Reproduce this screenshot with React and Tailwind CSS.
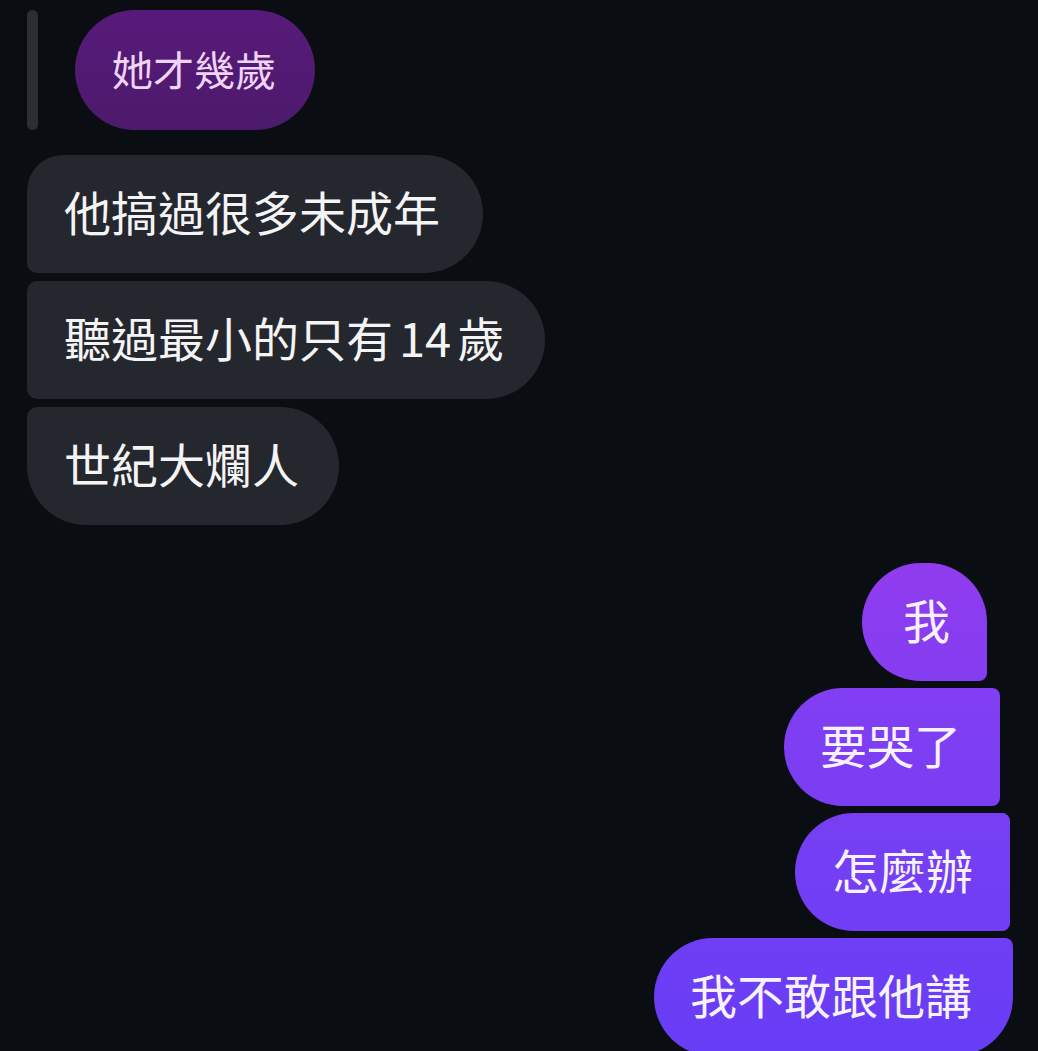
const font = { fontFamily: '"Noto Sans CJK TC", "Noto Sans", sans-serif' };

// Incoming messages, grouped (corner radii depend on position in the group)
const incoming = [
  { text: '他搞過很多未成年', corners: 'rounded-tl-[36px] rounded-bl-[10px] pr-[43px]' },
  { text: '聽過最小的只有', tail: '14', end: '歲', corners: 'rounded-tl-[10px] rounded-bl-[10px] pr-[41px]' },
  { text: '世紀大爛人', corners: 'rounded-tl-[10px] rounded-bl-[59px] pr-[40px]' },
];

function Incoming({ msg }) {
  return (
    <div
      className={`h-[118px] pb-[8px] flex items-center self-start bg-[#25272e] rounded-r-[59px] pl-[37px] text-[47px] text-[#f4f4f5] leading-none ${msg.corners}`}
    >
      <span>
        {msg.text}
        {msg.tail && <span className="px-[6px]">{msg.tail}</span>}
        {msg.end}
      </span>
    </div>
  );
}

function Outgoing({ text, className }) {
  return (
    <div
      className={`h-[118px] pb-[8px] flex items-center self-end rounded-l-[59px] text-[47px] text-[#f7f2ff] leading-none ${className}`}
    >
      <span>{text}</span>
    </div>
  );
}

export default function App() {
  return (
    <div style={font} className="w-[1038px] h-[1051px] overflow-hidden bg-[#0a0d12] flex flex-col">
      {/* Replied-to message preview */}
      <div className="flex items-stretch gap-[37px] pl-[27px] pt-[10px]">
        <div className="w-[11px] rounded-full bg-[#2c2e35]" />
        <div className="h-[120px] pl-[37px] pr-[39px] pb-[4px] flex items-center rounded-full bg-gradient-to-b from-[#581a7a] to-[#4c1a6c] text-[41px] text-[#efd4f5] leading-none">
          她才幾歲
        </div>
      </div>

      <div className="flex flex-col gap-[8px] pl-[27px] mt-[25px]">
        {incoming.map((m) => (
          <Incoming key={m.text} msg={m} />
        ))}
      </div>

      <div className="flex flex-col gap-[7px] mt-[38px]">
        <Outgoing
          text="我"
          className="mr-[51px] w-[125px] justify-center pl-[4px] rounded-tr-[59px] rounded-br-[8px] bg-gradient-to-b from-[#903cee] to-[#853df1]"
        />
        <Outgoing
          text="要哭了"
          className="mr-[38px] pl-[36px] pr-[39px] rounded-tr-[8px] rounded-br-[8px] bg-gradient-to-b from-[#823ef2] to-[#7a3ef3]"
        />
        <Outgoing
          text="怎麼辦"
          className="mr-[28px] pl-[37px] pr-[37px] rounded-tr-[8px] rounded-br-[8px] bg-gradient-to-b from-[#773ff4] to-[#703ef5]"
        />
        <Outgoing
          text="我不敢跟他講"
          className="mr-[25px] pl-[36px] pr-[41px] rounded-tr-[8px] rounded-br-[59px] bg-gradient-to-b from-[#6f3ef5] to-[#673df6]"
        />
      </div>
    </div>
  );
}
